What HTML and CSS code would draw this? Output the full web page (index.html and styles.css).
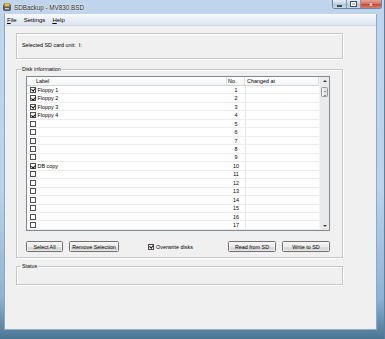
FILE: index.html
```html
<!DOCTYPE html>
<html lang="en">
<head>
    <meta charset="UTF-8">
    <title>SDBackup - MV830.BSD</title>
    <link rel="stylesheet" href="styles.css">
</head>
<body>
    <div class="window">
        <div class="titlebar">
            <svg class="app-icon" width="8" height="8" viewBox="0 0 8 8">
                <rect x="0.5" y="1.5" width="7" height="6" rx="1" fill="#5b6066" stroke="#2e3135" stroke-width="0.6"/>
                <rect x="1.5" y="0.5" width="5" height="3" fill="#f2c23a" stroke="#a3781a" stroke-width="0.5"/>
                <rect x="2" y="5" width="4" height="1.3" fill="#c9ced4"/>
            </svg>
            <span class="title">SDBackup - MV830.BSD</span>
            <div class="controls">
                <div class="ctl min"><span></span></div>
                <div class="ctl max"><span></span></div>
                <div class="ctl close">x</div>
            </div>
        </div>

        <div class="client">
            <div class="menubar">
                <span><u>F</u>ile</span>
                <span>Settings</span>
                <span><u>H</u>elp</span>
            </div>

            <div class="content">
                <div class="group unit">Selected SD card unit:&nbsp; I:</div>

                <fieldset class="group disk">
                    <legend>Disk information</legend>
                    <div class="list">
                        <div class="list-body">
                            <div class="list-head">
                                <div class="c-label">Label</div>
                                <div class="c-no">No.</div>
                                <div class="c-date">Changed at</div>
                            </div>
                            <div class="row"><div class="c-label"><span class="chk on"></span>Floppy 1</div><div class="c-no">1</div><div class="c-date"></div></div>
                            <div class="row"><div class="c-label"><span class="chk on"></span>Floppy 2</div><div class="c-no">2</div><div class="c-date"></div></div>
                            <div class="row"><div class="c-label"><span class="chk on"></span>Floppy 3</div><div class="c-no">3</div><div class="c-date"></div></div>
                            <div class="row"><div class="c-label"><span class="chk on"></span>Floppy 4</div><div class="c-no">4</div><div class="c-date"></div></div>
                            <div class="row"><div class="c-label"><span class="chk"></span></div><div class="c-no">5</div><div class="c-date"></div></div>
                            <div class="row"><div class="c-label"><span class="chk"></span></div><div class="c-no">6</div><div class="c-date"></div></div>
                            <div class="row"><div class="c-label"><span class="chk"></span></div><div class="c-no">7</div><div class="c-date"></div></div>
                            <div class="row"><div class="c-label"><span class="chk"></span></div><div class="c-no">8</div><div class="c-date"></div></div>
                            <div class="row"><div class="c-label"><span class="chk"></span></div><div class="c-no">9</div><div class="c-date"></div></div>
                            <div class="row"><div class="c-label"><span class="chk on"></span>DB copy</div><div class="c-no">10</div><div class="c-date"></div></div>
                            <div class="row"><div class="c-label"><span class="chk"></span></div><div class="c-no">11</div><div class="c-date"></div></div>
                            <div class="row"><div class="c-label"><span class="chk"></span></div><div class="c-no">12</div><div class="c-date"></div></div>
                            <div class="row"><div class="c-label"><span class="chk"></span></div><div class="c-no">13</div><div class="c-date"></div></div>
                            <div class="row"><div class="c-label"><span class="chk"></span></div><div class="c-no">14</div><div class="c-date"></div></div>
                            <div class="row"><div class="c-label"><span class="chk"></span></div><div class="c-no">15</div><div class="c-date"></div></div>
                            <div class="row"><div class="c-label"><span class="chk"></span></div><div class="c-no">16</div><div class="c-date"></div></div>
                            <div class="row"><div class="c-label"><span class="chk"></span></div><div class="c-no">17</div><div class="c-date"></div></div>
                        </div>
                        <div class="scrollbar">
                            <div class="arrow up"></div>
                            <div class="thumb"></div>
                            <div class="track"></div>
                            <div class="arrow down"></div>
                        </div>
                    </div>

                    <div class="buttons">
                        <button class="btn select-all">Select All</button>
                        <button class="btn remove">Remove Selection</button>
                        <label class="overwrite"><span class="chk on"></span>Overwrite disks</label>
                        <button class="btn read">Read from SD</button>
                        <button class="btn write">Write to SD</button>
                    </div>
                </fieldset>

                <fieldset class="group status">
                    <legend>Status</legend>
                </fieldset>
            </div>
        </div>
    </div>
</body>
</html>
```

FILE: styles.css
```css
*{
    box-sizing: border-box;
}
body{
    margin: 0;
    font-family: "Liberation Sans", Arial, sans-serif;
    font-size: 5.4px;
    color: #000;
}
.window{
    width: 385px;
    height: 339px;
    display: flex;
    flex-direction: column;
    background: linear-gradient(to bottom, #c0d5eb 0%, #bdd3ea 55%, #8fb2d2 88%, #4a7693 100%);
    border-right: 1px solid #5c7f9e;
}

/* title bar */
.titlebar{
    height: 14px;
    display: flex;
    align-items: center;
    flex-shrink: 0;
}
.app-icon{
    margin-left: 3px;
}
.title{
    margin-left: 3px;
    font-size: 6.3px;
    color: #1b1b1b;
    text-shadow: 0 0 2px #fff, 0 0 1px #fff;
}
.controls{
    margin-left: auto;
    margin-right: 2px;
    align-self: flex-start;
    display: flex;
    height: 9px;
    border: 1px solid #6c86a2;
    border-top: none;
    border-radius: 0 0 3px 3px;
    overflow: hidden;
}
.ctl{
    height: 100%;
    display: flex;
    align-items: center;
    justify-content: center;
}
.min, .max{
    width: 14px;
    background: linear-gradient(#e4ecf5, #c3d4e6 50%, #b1c5da 51%, #c9d9ea);
    border-right: 1px solid #7d97b2;
}
.min span{
    width: 5px;
    height: 2px;
    margin-top: 3px;
    background: #fff;
    border: 0.5px solid #3c4c5e;
}
.max span{
    width: 5px;
    height: 4px;
    border: 1px solid #fff;
    outline: 0.5px solid #3c4c5e;
}
.close{
    width: 20px;
    background: linear-gradient(#e8a595, #d2705e 50%, #c2452f 51%, #d8826b);
    color: #fff;
    font-size: 6px;
    font-weight: bold;
    text-shadow: 0 0 1px #5a1b10;
}

/* client area */
.client{
    flex: 1;
    margin: 0 7px 9px 4px;
    background: #f0f0f0;
    border: 1px solid #8ba8c4;
    border-top: none;
    display: flex;
    flex-direction: column;
}
.menubar{
    height: 12px;
    display: flex;
    align-items: center;
    gap: 7px;
    padding-left: 2px;
    font-size: 6px;
    background: linear-gradient(#f8fafd, #e6ecf4 60%, #dce4ef);
    border-bottom: 1px solid #cdd6e2;
    flex-shrink: 0;
}
.menubar u{
    text-decoration-thickness: 0.5px;
}
.content{
    padding: 7px 33px 0 11px;
}

/* group boxes */
.group{
    border: 1px solid #c6c6c6;
    box-shadow: inset 1px 1px 0 #fff, 1px 1px 0 #fff;
}
.unit{
    height: 26px;
    display: flex;
    align-items: center;
    padding: 0 0 2px 5px;
}
fieldset.group{
    margin: 0;
    min-width: 0;
}
legend{
    padding: 0 1px;
    line-height: 7px;
    font-size: 5.4px;
}
.disk{
    margin-top: 6.5px !important;
    padding: 3.5px 12px 5px 9px;
}
.disk legend{
    margin-left: -5px;
}

/* list view */
.list{
    height: 155px;
    display: flex;
    border: 1px solid #828790;
    background: #fff;
}
.list-body{
    flex: 1;
    display: flex;
    flex-direction: column;
}
.list-head, .row{
    display: flex;
}
.list-head{
    height: 9px;
    align-items: center;
    background: linear-gradient(#ffffff, #f4f5f7);
    border-bottom: 1px solid #d5d5d5;
}
.list-head > div{
    height: 100%;
    display: flex;
    align-items: center;
    border-right: 1px solid #dadde2;
}
.row{
    height: 8.5px;
    border-bottom: 1px solid #ececec;
    align-items: center;
}
.c-label{
    width: 200px;
    display: flex;
    align-items: center;
    padding-left: 3px;
}
.list-head .c-label{
    padding-left: 9px;
}
.c-no{
    width: 18px;
    justify-content: center;
    text-align: center;
}
.list-head .c-no{
    justify-content: flex-start;
    padding-left: 1px;
}
.c-date{
    flex: 1;
    height: 100%;
    padding-left: 2px;
}
.row .c-date{
    border-left: 1px solid #e6e6e6;
}

/* checkboxes */
.chk{
    width: 6px;
    height: 6px;
    flex-shrink: 0;
    margin-right: 1.5px;
    border: 1px solid #4e4e4e;
    background: #fff;
    position: relative;
}
.chk.on::after{
    content: "";
    position: absolute;
    left: 1.2px;
    top: -0.3px;
    width: 1.6px;
    height: 3px;
    border: solid #111;
    border-width: 0 1px 1px 0;
    transform: rotate(40deg);
}

/* scrollbar */
.scrollbar{
    width: 10px;
    display: flex;
    flex-direction: column;
    background: #eaeaea;
    border-left: 1px solid #f4f4f4;
}
.arrow{
    height: 9px;
    position: relative;
}
.arrow::after{
    content: "";
    position: absolute;
    left: 3px;
    border-left: 2px solid transparent;
    border-right: 2px solid transparent;
}
.up::after{
    top: 3px;
    border-bottom: 2px solid #3a3a3a;
}
.down::after{
    bottom: 3px;
    border-top: 2px solid #3a3a3a;
}
.thumb{
    height: 10px;
    margin: 1px 1px 0 1px;
    border: 1px solid #989898;
    border-radius: 1.5px;
    background: linear-gradient(to right, #f3f3f3, #dcdcdc);
    box-shadow: inset 0 3px 0 -2px transparent;
    position: relative;
}
.thumb::after{
    content: "";
    position: absolute;
    left: 1.5px;
    right: 1.5px;
    top: 2.5px;
    height: 3px;
    border-top: 1px solid #8a8a8a;
    border-bottom: 1px solid #8a8a8a;
}
.track{
    flex: 1;
}

/* buttons */
.buttons{
    height: 11px;
    margin-top: 10px;
    display: flex;
    align-items: center;
}
.btn{
    height: 11px;
    padding: 0;
    font-family: inherit;
    font-size: 5.4px;
    color: #000;
    border: 1px solid #707070;
    border-radius: 1.5px;
    background: linear-gradient(#f4f4f4 0%, #ececec 50%, #dedede 51%, #d2d2d2 100%);
    box-shadow: inset 0 0 0 0.5px #fbfbfb;
}
.select-all{
    width: 37px;
}
.remove{
    width: 50px;
    margin-left: 6px;
}
.overwrite{
    margin-left: 29px;
    display: flex;
    align-items: center;
}
.overwrite .chk{
    margin-right: 2px;
}
.read{
    width: 48px;
    margin-left: auto;
}
.write{
    width: 48px;
    margin-left: 6px;
}

.status{
    margin-top: 4.5px !important;
    height: 22.5px;
    padding: 0 5px;
}
.status legend{
    margin-left: -1px;
}
```
